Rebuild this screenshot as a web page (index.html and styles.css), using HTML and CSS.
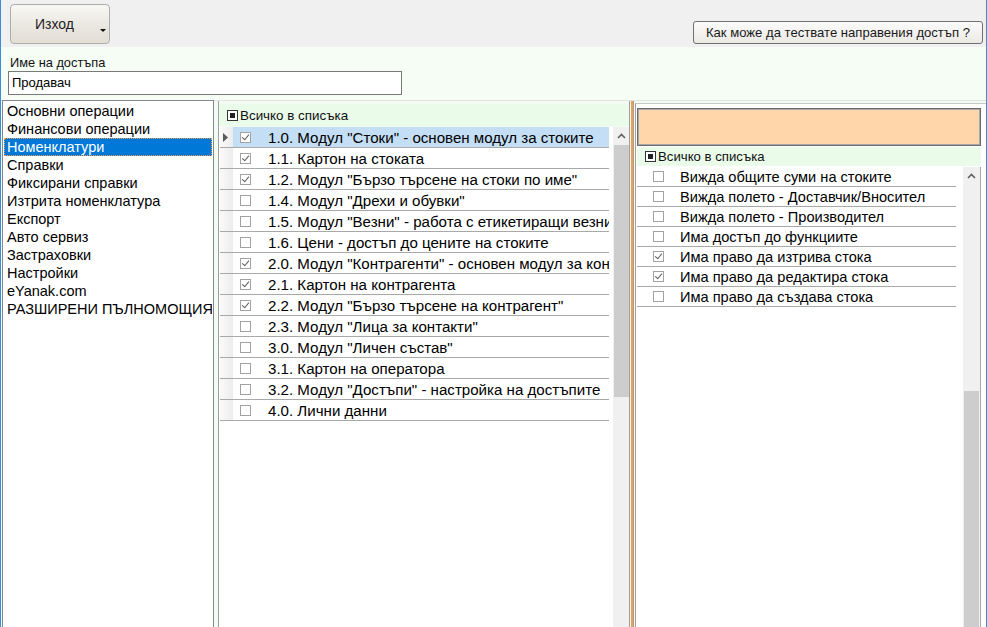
FILE: index.html
```html
<!DOCTYPE html>
<html lang="bg">
<head>
<meta charset="utf-8">
<title>Достъпи</title>
<link rel="stylesheet" href="styles.css">
</head>
<body>
<div class="window">
  <div class="toolbar">
    <button class="exit-btn"><span class="exit-label">Изход</span><span class="caret"></span></button>
    <button class="help-btn">Как може да тествате направения достъп ?</button>
  </div>
  <div class="namebar">
    <div class="name-label">Име на достъпа</div>
    <div class="name-input">Продавач</div>
  </div>
  <div class="main">
    <ul class="menu">
      <li>Основни операции</li>
      <li>Финансови операции</li>
      <li class="selected">Номенклатури</li>
      <li>Справки</li>
      <li>Фиксирани справки</li>
      <li>Изтрита номенклатура</li>
      <li>Експорт</li>
      <li>Авто сервиз</li>
      <li>Застраховки</li>
      <li>Настройки</li>
      <li>eYanak.com</li>
      <li>РАЗШИРЕНИ ПЪЛНОМОЩИЯ</li>
    </ul>
    <section class="modules">
      <div class="all-header"><span class="tri-box"><span></span></span>Всичко в списъка</div>
      <div class="grid">
        <div class="rows">
          <div class="row current"><span class="rh"><svg width="5" height="9" viewBox="0 0 5 9"><path d="M0 0 L5 4.5 L0 9 Z" fill="#5a5a5a"/></svg></span><span class="cc"><span class="cb on"></span></span><span class="ct">1.0. Модул "Стоки" - основен модул за стоките</span></div>
          <div class="row"><span class="rh"></span><span class="cc"><span class="cb on"></span></span><span class="ct">1.1. Картон на стоката</span></div>
          <div class="row"><span class="rh"></span><span class="cc"><span class="cb on"></span></span><span class="ct">1.2. Модул "Бързо търсене на стоки по име"</span></div>
          <div class="row"><span class="rh"></span><span class="cc"><span class="cb"></span></span><span class="ct">1.4. Модул "Дрехи и обувки"</span></div>
          <div class="row"><span class="rh"></span><span class="cc"><span class="cb"></span></span><span class="ct">1.5. Модул "Везни" - работа с етикетиращи везни</span></div>
          <div class="row"><span class="rh"></span><span class="cc"><span class="cb"></span></span><span class="ct">1.6. Цени - достъп до цените на стоките</span></div>
          <div class="row"><span class="rh"></span><span class="cc"><span class="cb on"></span></span><span class="ct">2.0. Модул "Контрагенти" - основен модул за контрагентите</span></div>
          <div class="row"><span class="rh"></span><span class="cc"><span class="cb on"></span></span><span class="ct">2.1. Картон на контрагента</span></div>
          <div class="row"><span class="rh"></span><span class="cc"><span class="cb on"></span></span><span class="ct">2.2. Модул "Бързо търсене на контрагент"</span></div>
          <div class="row"><span class="rh"></span><span class="cc"><span class="cb"></span></span><span class="ct">2.3. Модул "Лица за контакти"</span></div>
          <div class="row"><span class="rh"></span><span class="cc"><span class="cb"></span></span><span class="ct">3.0. Модул "Личен състав"</span></div>
          <div class="row"><span class="rh"></span><span class="cc"><span class="cb"></span></span><span class="ct">3.1. Картон на оператора</span></div>
          <div class="row"><span class="rh"></span><span class="cc"><span class="cb"></span></span><span class="ct">3.2. Модул "Достъпи" - настройка на достъпите</span></div>
          <div class="row"><span class="rh"></span><span class="cc"><span class="cb"></span></span><span class="ct">4.0. Лични данни</span></div>
        </div>
        <div class="vscroll mid">
          <div class="arrow"><svg width="9" height="6" viewBox="0 0 9 6"><path d="M1 5 L4.5 1.5 L8 5" fill="none" stroke="#606060" stroke-width="1.6"/></svg></div>
          <div class="thumb"></div>
        </div>
      </div>
    </section>
    <div class="splitter"></div>
    <section class="details">
      <div class="orange"></div>
      <div class="all-header small"><span class="tri-box"><span></span></span>Всичко в списъка</div>
      <div class="grid">
        <div class="rows">
          <div class="row"><span class="cc"><span class="cb"></span></span><span class="ct">Вижда общите суми на стоките</span></div>
          <div class="row"><span class="cc"><span class="cb"></span></span><span class="ct">Вижда полето - Доставчик/Вносител</span></div>
          <div class="row"><span class="cc"><span class="cb"></span></span><span class="ct">Вижда полето - Производител</span></div>
          <div class="row"><span class="cc"><span class="cb"></span></span><span class="ct">Има достъп до функциите</span></div>
          <div class="row"><span class="cc"><span class="cb on"></span></span><span class="ct">Има право да изтрива стока</span></div>
          <div class="row"><span class="cc"><span class="cb on"></span></span><span class="ct">Има право да редактира стока</span></div>
          <div class="row"><span class="cc"><span class="cb"></span></span><span class="ct">Има право да създава стока</span></div>
        </div>
        <div class="vscroll right">
          <div class="arrow"><svg width="9" height="6" viewBox="0 0 9 6"><path d="M1 5 L4.5 1.5 L8 5" fill="none" stroke="#606060" stroke-width="1.6"/></svg></div>
          <div class="thumb"></div>
        </div>
      </div>
    </section>
  </div>
</div>
</body>
</html>
```

FILE: styles.css
```css
* { box-sizing: border-box; }
html, body { margin: 0; padding: 0; }
body {
  width: 987px;
  height: 627px;
  overflow: hidden;
  font-family: "Liberation Sans", Arial, sans-serif;
  color: #000;
  background: #fff;
}
.window {
  width: 987px;
  height: 627px;
  display: flex;
  flex-direction: column;
  border-left: 1px solid #3b8ddb;
  border-right: 1px solid #3b8ddb;
  overflow: hidden;
}

/* toolbar */
.toolbar {
  height: 47px;
  flex: none;
  background: #f0f0f0;
  display: flex;
  align-items: flex-start;
  justify-content: space-between;
  padding: 4px 3px 0 9px;
}
.exit-btn {
  width: 100px;
  height: 40px;
  border: 1px solid #adadad;
  border-radius: 4px;
  background: linear-gradient(#f8f7f4, #e9e6df 60%, #e2ded6);
  font-family: inherit;
  font-size: 14px;
  color: #222;
  position: relative;
  padding: 0;
  display: flex;
  align-items: center;
}
.exit-label { margin-left: 24px; margin-top: -1px; }
.caret {
  position: absolute;
  left: 89px;
  top: 24px;
  width: 0;
  height: 0;
  border-left: 3px solid transparent;
  border-right: 3px solid transparent;
  border-top: 3px solid #111;
}
.help-btn {
  margin-top: 17px;
  width: 290px;
  height: 23px;
  border: 1px solid #707070;
  border-radius: 3px;
  background: linear-gradient(#fbfbfb, #ebe9e4);
  font-family: inherit;
  font-size: 13.1px;
  color: #1a1a1a;
  padding: 0;
}

/* name */
.namebar {
  height: 53px;
  flex: none;
  background: #f5fdf5;
  padding: 9px 0 0 7px;
}
.name-label {
  font-size: 12.8px;
  line-height: 14px;
  margin-left: 2px;
  color: #111;
}
.name-input {
  margin-top: 1px;
  width: 394px;
  height: 24px;
  border: 1px solid #7a7a7a;
  background: #fff;
  font-size: 13px;
  line-height: 22px;
  padding-left: 3px;
}

/* main */
.main {
  flex: 1;
  display: flex;
  min-height: 0;
  background: #f3fcf3;
  border-top: 1px solid #e3e3e3;
}
.menu {
  list-style: none;
  margin: 0 0 0 1px;
  padding: 1px 1px;
  width: 212px;
  flex: none;
  border: 1px solid #828790;
  border-bottom: none;
  background: #fff;
  margin-top: -1px;
}
.menu li {
  height: 18px;
  line-height: 18px;
  font-size: 14.5px;
  padding-left: 3px;
  white-space: nowrap;
  overflow: hidden;
}
.menu li.selected {
  background: #0078d7;
  color: #fff;
  outline: 1px dotted #f0a050;
  outline-offset: -1px;
}

.modules {
  margin-left: 4px;
  width: 411px;
  flex: none;
  display: flex;
  flex-direction: column;
  border-left: 1px solid #a0a0a0;
  padding-top: 3px;
}
.all-header {
  height: 22px;
  flex: none;
  background: #eafbea;
  display: flex;
  align-items: center;
  padding-left: 8px;
  font-size: 13.4px;
  color: #111;
}
.all-header.small { height: 19px; padding-left: 8px; font-size: 13.2px; }
.tri-box {
  width: 11px;
  height: 11px;
  border: 1px solid #333;
  padding: 2px;
  background: #fff;
  margin-right: 2px;
  flex: none;
}
.tri-box span {
  display: block;
  width: 5px;
  height: 5px;
  background: #222;
}

.grid {
  flex: 1;
  display: flex;
  background: #fff;
  min-height: 0;
  margin-top: 1px;
}
.rows {
  flex: none;
  padding-left: 1px;
}
.modules .rows { width: 390px; margin-right: 4px; }
.row {
  display: flex;
  align-items: center;
  height: 21px;
  border-bottom: 1px solid #a9a9a9;
  white-space: nowrap;
}
.rh {
  width: 13px;
  height: 100%;
  flex: none;
  background: linear-gradient(to right, #fafafa, #ececec);
  display: flex;
  align-items: center;
  padding-left: 3px;
}
.cc {
  width: 30px;
  height: 100%;
  flex: none;
  display: flex;
  align-items: center;
  padding-left: 7px;
}
.ct {
  flex: 1;
  overflow: hidden;
  font-size: 15.1px;
  padding-left: 5px;
  height: 100%;
  line-height: 21px;
}
.row.current .cc, .row.current .ct { background: #c4def6; }
.cb {
  width: 11px;
  height: 11px;
  border: 1px solid #a2a2a2;
  background: #fff;
  position: relative;
}
.cb.on::after {
  content: "";
  position: absolute;
  left: 2px;
  top: 0px;
  width: 3px;
  height: 6px;
  border-right: 1.5px solid #5a5a5a;
  border-bottom: 1.5px solid #5a5a5a;
  transform: rotate(40deg);
  transform-origin: 60% 60%;
}

.vscroll {
  width: 17px;
  flex: none;
  background: #f0f0f0;
  display: flex;
  flex-direction: column;
}
.vscroll .arrow {
  height: 17px;
  display: flex;
  align-items: center;
  justify-content: center;
  flex: none;
}
.vscroll.mid .thumb {
  height: 252px;
  background: #cdcdcd;
  margin: 1px 1px 0 1px;
}
.vscroll.right .thumb {
  margin: 207px 1px 0 1px;
  flex: 1;
  background: #cdcdcd;
}

.splitter {
  width: 6px;
  flex: none;
  background: linear-gradient(to right, #a0a0a0 0 1px, #f5f5f5 1px 2px, #f0a048 2px 4px, #a0a0a0 4px 5px, #f8f8f8 5px 6px);
}

.details {
  flex: 1;
  display: flex;
  flex-direction: column;
  border-left: 1px solid #a0a0a0;
  border-top: 1px solid #c8c8c8;
  margin-top: 2px;
  padding: 4px 5px 0 1px;
  background: #fff;
}
.orange {
  height: 38px;
  flex: none;
  background: #ffd6a9;
  border: 1px solid #6a6a6a;
  box-shadow: inset 1px 1px 0 #a8a8a8, inset -1px -1px 0 #a8a8a8;
}
.details .all-header { margin-top: 1px; }
.details .grid { margin-top: 1px; border-right: 1px solid #a8a8a8; }
.details .rows { width: 319px; margin-right: 7px; padding-left: 0; }
.details .row { height: 20px; }
.details .cc { width: 43px; padding-left: 16px; }
.details .ct { font-size: 14.6px; padding-left: 0; line-height: 20px; }
.details .vscroll { margin-left: auto; }
```
